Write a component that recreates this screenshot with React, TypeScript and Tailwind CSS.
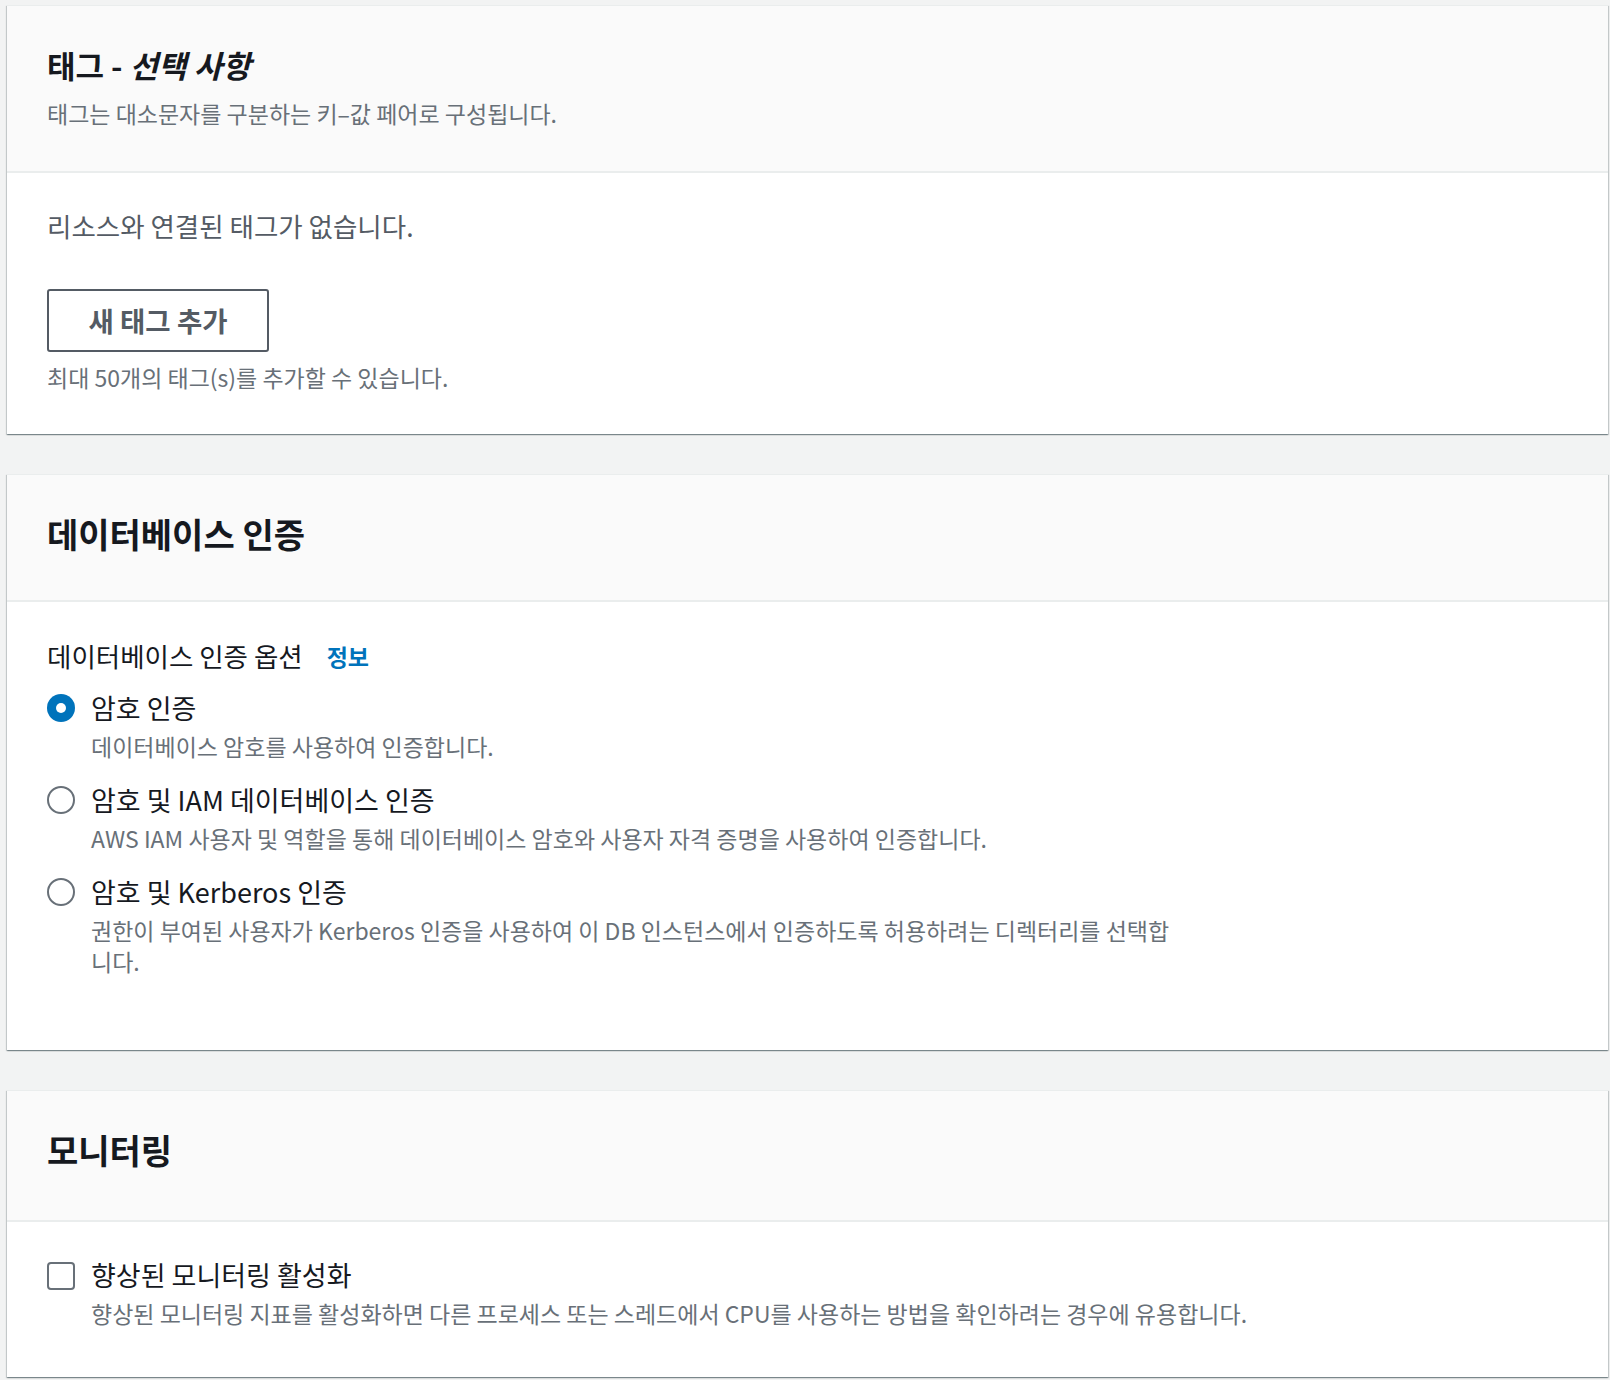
import React from "react";

const FONT = { fontFamily: '"Noto Sans CJK KR", "Noto Sans", sans-serif' };

function Card({ header, children, bodyClass }: { header: React.ReactNode; children: React.ReactNode; bodyClass: string }) {
  return (
    <section className="bg-white border-t border-[#eaeded] shadow-[0_1px_1px_0_rgba(0,28,36,0.3),1px_1px_1px_0_rgba(0,28,36,0.15),-1px_1px_1px_0_rgba(0,28,36,0.15)]">
      <div className="bg-[#fafafa] border-b-2 border-[#eaeded] px-[40px]">{header}</div>
      <div className={bodyClass}>{children}</div>
    </section>
  );
}

function Radio({ checked }: { checked: boolean }) {
  return checked ? (
    <span className="mt-[2px] flex h-[28px] w-[28px] shrink-0 items-center justify-center rounded-full bg-[#0073bb]">
      <span className="h-[10px] w-[10px] rounded-full bg-white" />
    </span>
  ) : (
    <span className="mt-[2px] h-[28px] w-[28px] shrink-0 rounded-full border-[2px] border-[#687078] bg-white" />
  );
}

function Option({ checked, label, desc }: { checked: boolean; label: string; desc: React.ReactNode }) {
  return (
    <div className="flex gap-[16px]">
      <Radio checked={checked} />
      <div className="flex flex-col gap-[7px]">
        <div className="text-[27px] leading-[32px] text-[#16191f]">{label}</div>
        <div className="text-[23px] leading-[31px] text-[#687078]">{desc}</div>
      </div>
    </div>
  );
}

export default function App() {
  return (
    <div className="min-h-[1380px] bg-[#f2f3f3] pt-[5px] pl-[7px] pr-[2px] pb-[4px]" style={FONT}>
      <div className="flex flex-col gap-[40px]">
        {/* Tags */}
        <Card
          header={
            <div className="pt-[41px] pb-[43px]">
              <h2 className="text-[31px] leading-[36px] font-bold text-[#16191f]">
                태그 - <i className="italic">선택 사항</i>
              </h2>
              <p className="mt-[15px] text-[23px] leading-[30px] text-[#687078]">
                태그는 대소문자를 구분하는 키–값 페어로 구성됩니다.
              </p>
            </div>
          }
          bodyClass="px-[40px] pt-[37px] pb-[42px]"
        >
          <p className="text-[26.5px] leading-[32px] text-[#545b64]">리소스와 연결된 태그가 없습니다.</p>
          <button className="mt-[47px] flex h-[63px] w-[222px] items-center justify-center rounded-[3px] border-2 border-[#545b64] bg-white text-[27.5px] font-bold text-[#545b64]">
            새 태그 추가
          </button>
          <p className="mt-[10px] text-[23px] leading-[30px] text-[#687078]">최대 50개의 태그(s)를 추가할 수 있습니다.</p>
        </Card>

        {/* DB auth */}
        <Card
          header={
            <div className="pt-[39px] pb-[46px]">
              <h2 className="text-[34px] leading-[40px] font-bold text-[#16191f]">데이터베이스 인증</h2>
            </div>
          }
          bodyClass="px-[40px] pt-[38px] pb-[73px]"
        >
          <div className="flex items-center text-[26.5px] leading-[32px] text-[#16191f]">
            <span>데이터베이스 인증 옵션</span>
            <a className="ml-[24px] text-[23px] font-bold text-[#0073bb]">정보</a>
          </div>
          <div className="mt-[20px] flex flex-col gap-[22px]">
            <Option checked label="암호 인증" desc="데이터베이스 암호를 사용하여 인증합니다." />
            <Option
              checked={false}
              label="암호 및 IAM 데이터베이스 인증"
              desc="AWS IAM 사용자 및 역할을 통해 데이터베이스 암호와 사용자 자격 증명을 사용하여 인증합니다."
            />
            <Option
              checked={false}
              label="암호 및 Kerberos 인증"
              desc={
                <>
                  권한이 부여된 사용자가 Kerberos 인증을 사용하여 이 DB 인스턴스에서 인증하도록 허용하려는 디렉터리를 선택합
                  <br />
                  니다.
                </>
              }
            />
          </div>
        </Card>

        {/* Monitoring */}
        <Card
          header={
            <div className="pt-[39px] pb-[50px]">
              <h2 className="text-[34px] leading-[40px] font-bold text-[#16191f]">모니터링</h2>
            </div>
          }
          bodyClass="px-[40px] pt-[37px] pb-[48px]"
        >
          <div className="flex gap-[16px]">
            <span className="mt-[3px] h-[28px] w-[28px] shrink-0 rounded-[4px] border-2 border-[#687078] bg-white" />
            <div className="flex flex-col gap-[7px]">
              <div className="text-[27px] leading-[32px] text-[#16191f]">향상된 모니터링 활성화</div>
              <div className="text-[23px] leading-[31px] text-[#687078]">
                향상된 모니터링 지표를 활성화하면 다른 프로세스 또는 스레드에서 CPU를 사용하는 방법을 확인하려는 경우에 유용합니다.
              </div>
            </div>
          </div>
        </Card>
      </div>
    </div>
  );
}
